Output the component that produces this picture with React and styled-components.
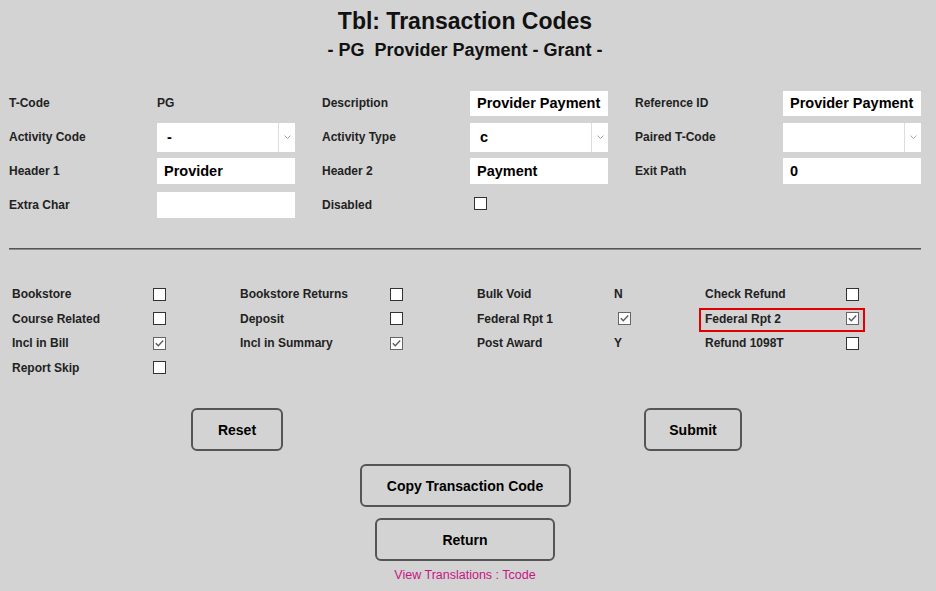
import React from "react";
import styled, { createGlobalStyle } from "styled-components";

const GlobalStyle = createGlobalStyle`
  body {
    margin: 0;
    background: #d3d3d3;
    font-family: "Liberation Sans", Arial, sans-serif;
  }
`;

const Page = styled.div`
  width: 912px;
  margin-left: 9px;
  padding-top: 7px;
  color: #111;
`;

const Title = styled.h1`
  margin: 0;
  text-align: center;
  font-size: 23px;
  line-height: 28px;
  font-weight: 700;
`;

const SubTitle = styled.h2`
  margin: 4px 0 0;
  text-align: center;
  font-size: 18px;
  line-height: 22px;
  font-weight: 700;
  white-space: pre;
`;

const FormGrid = styled.div`
  display: grid;
  margin-top: 25px;
  grid-template-columns: 148px 165px 148px 165px 148px 138px;
  grid-auto-rows: 34px;
  align-items: center;
`;

const Label = styled.span`
  font-size: 12px;
  font-weight: 700;
  color: #222;
  white-space: nowrap;
`;

const Value = styled.span`
  font-size: 12px;
  font-weight: 700;
  color: #222;
`;

const TextInput = styled.input`
  box-sizing: border-box;
  width: 138px;
  height: ${(p) => p.$h || 26}px;
  border: none;
  outline: none;
  background: #fff;
  padding: 0 7px;
  font-family: "Liberation Sans", Arial, sans-serif;
  font-size: 14.5px;
  font-weight: 700;
  color: #000;
`;

const SelectBox = styled.div`
  box-sizing: border-box;
  width: 138px;
  height: 29px;
  background: #fff;
  display: flex;
  align-items: center;
`;

const SelectValue = styled.span`
  flex: 1;
  padding-left: 10px;
  font-size: 14.5px;
  font-weight: 700;
  color: #000;
`;

const SelectArrow = styled.span`
  width: 16px;
  align-self: stretch;
  border-left: 1px solid #ddd;
  display: flex;
  align-items: center;
  justify-content: center;
`;

const Box = styled.span`
  box-sizing: border-box;
  display: inline-flex;
  align-items: center;
  justify-content: center;
  width: 13px;
  height: 13px;
  margin-left: 4px;
  background: #fff;
  border: 1px solid ${(p) => (p.$checked ? "#666" : "#333")};
`;

const Divider = styled.hr`
  margin: 26px 0 0;
  height: 0;
  border: none;
  border-top: 1px solid #555;
  border-bottom: 1px solid #8a8a8a;
`;

const FlagGrid = styled.div`
  display: grid;
  margin-top: 32px;
  padding-left: 3px;
  grid-template-columns: 228px 237px 228px auto;
  grid-auto-rows: 24.5px;
  align-items: center;
`;

const Pair = styled.div`
  position: relative;
  justify-self: start;
  display: flex;
  align-items: center;
  height: 100%;

  ${(p) =>
    p.$highlight &&
    `
    &::after {
      content: "";
      position: absolute;
      left: -6px;
      right: -6px;
      top: 1px;
      bottom: -1px;
      border: 2px solid #e00000;
    }
  `}
`;

const PairLabel = styled(Label)`
  width: ${(p) => p.$w}px;
`;

const ButtonRow = styled.div`
  display: grid;
  grid-template-columns: 1fr 1fr;
  justify-items: center;
  margin-top: 28px;
`;

const ButtonStack = styled.div`
  display: flex;
  flex-direction: column;
  align-items: center;
`;

const Button = styled.button`
  box-sizing: border-box;
  width: ${(p) => p.$w}px;
  height: 43px;
  margin-top: ${(p) => p.$mt || 0}px;
  border: 2px solid #555;
  border-radius: 6px;
  background: transparent;
  font-family: "Liberation Sans", Arial, sans-serif;
  font-size: 14px;
  font-weight: 700;
  color: #000;
  cursor: pointer;
`;

const LinkText = styled.a`
  margin-top: 7px;
  font-size: 12.5px;
  line-height: 14px;
  color: #c71585;
  text-decoration: none;
  cursor: pointer;
`;

const Chevron = () => (
  <svg width="7" height="4" viewBox="0 0 7 4">
    <path d="M0.5 0.5 L3.5 3.5 L6.5 0.5" fill="none" stroke="#a8a8a8" strokeWidth="1" />
  </svg>
);

const Checkbox = ({ checked }) => (
  <Box $checked={checked}>
    {checked && (
      <svg width="11" height="11" viewBox="0 0 11 11">
        <path d="M1.8 5.3 L4.3 7.8 L9.2 2.6" fill="none" stroke="#5c5c5c" strokeWidth="1.4" />
      </svg>
    )}
  </Box>
);

const Select = ({ value }) => (
  <SelectBox>
    <SelectValue>{value}</SelectValue>
    <SelectArrow>
      <Chevron />
    </SelectArrow>
  </SelectBox>
);

const labelWidths = [137, 146, 137, 137];

const flags = [
  { label: "Bookstore", check: false },
  { label: "Bookstore Returns", check: false },
  { label: "Bulk Void", text: "N" },
  { label: "Check Refund", check: false },
  { label: "Course Related", check: false },
  { label: "Deposit", check: false },
  { label: "Federal Rpt 1", check: true },
  { label: "Federal Rpt 2", check: true, highlight: true },
  { label: "Incl in Bill", check: true },
  { label: "Incl in Summary", check: true },
  { label: "Post Award", text: "Y" },
  { label: "Refund 1098T", check: false },
  { label: "Report Skip", check: false },
];

const App = () => {
  return (
    <>
      <GlobalStyle />
      <Page>
        <Title>Tbl: Transaction Codes</Title>
        <SubTitle>- PG  Provider Payment - Grant -</SubTitle>

        <FormGrid>
          <Label>T-Code</Label>
          <Value>PG</Value>
          <Label>Description</Label>
          <TextInput readOnly value="Provider Payment" $h={25} />
          <Label>Reference ID</Label>
          <TextInput readOnly value="Provider Payment" $h={25} />

          <Label>Activity Code</Label>
          <Select value="-" />
          <Label>Activity Type</Label>
          <Select value="c" />
          <Label>Paired T-Code</Label>
          <Select value="" />

          <Label>Header 1</Label>
          <TextInput readOnly value="Provider" />
          <Label>Header 2</Label>
          <TextInput readOnly value="Payment" />
          <Label>Exit Path</Label>
          <TextInput readOnly value="0" />

          <Label>Extra Char</Label>
          <TextInput readOnly value="" />
          <Label>Disabled</Label>
          <div>
            <Checkbox checked={false} />
          </div>
        </FormGrid>

        <Divider />

        <FlagGrid>
          {flags.map((f, i) => (
            <Pair key={f.label} $highlight={f.highlight}>
              <PairLabel $w={labelWidths[i % 4]}>{f.label}</PairLabel>
              {f.text ? <Value>{f.text}</Value> : <Checkbox checked={f.check} />}
            </Pair>
          ))}
        </FlagGrid>

        <ButtonRow>
          <Button $w={92}>Reset</Button>
          <Button $w={98}>Submit</Button>
        </ButtonRow>

        <ButtonStack>
          <Button $w={211} $mt={13}>
            Copy Transaction Code
          </Button>
          <Button $w={180} $mt={11}>
            Return
          </Button>
          <LinkText>View Translations : Tcode</LinkText>
        </ButtonStack>
      </Page>
    </>
  );
};

export default App;
